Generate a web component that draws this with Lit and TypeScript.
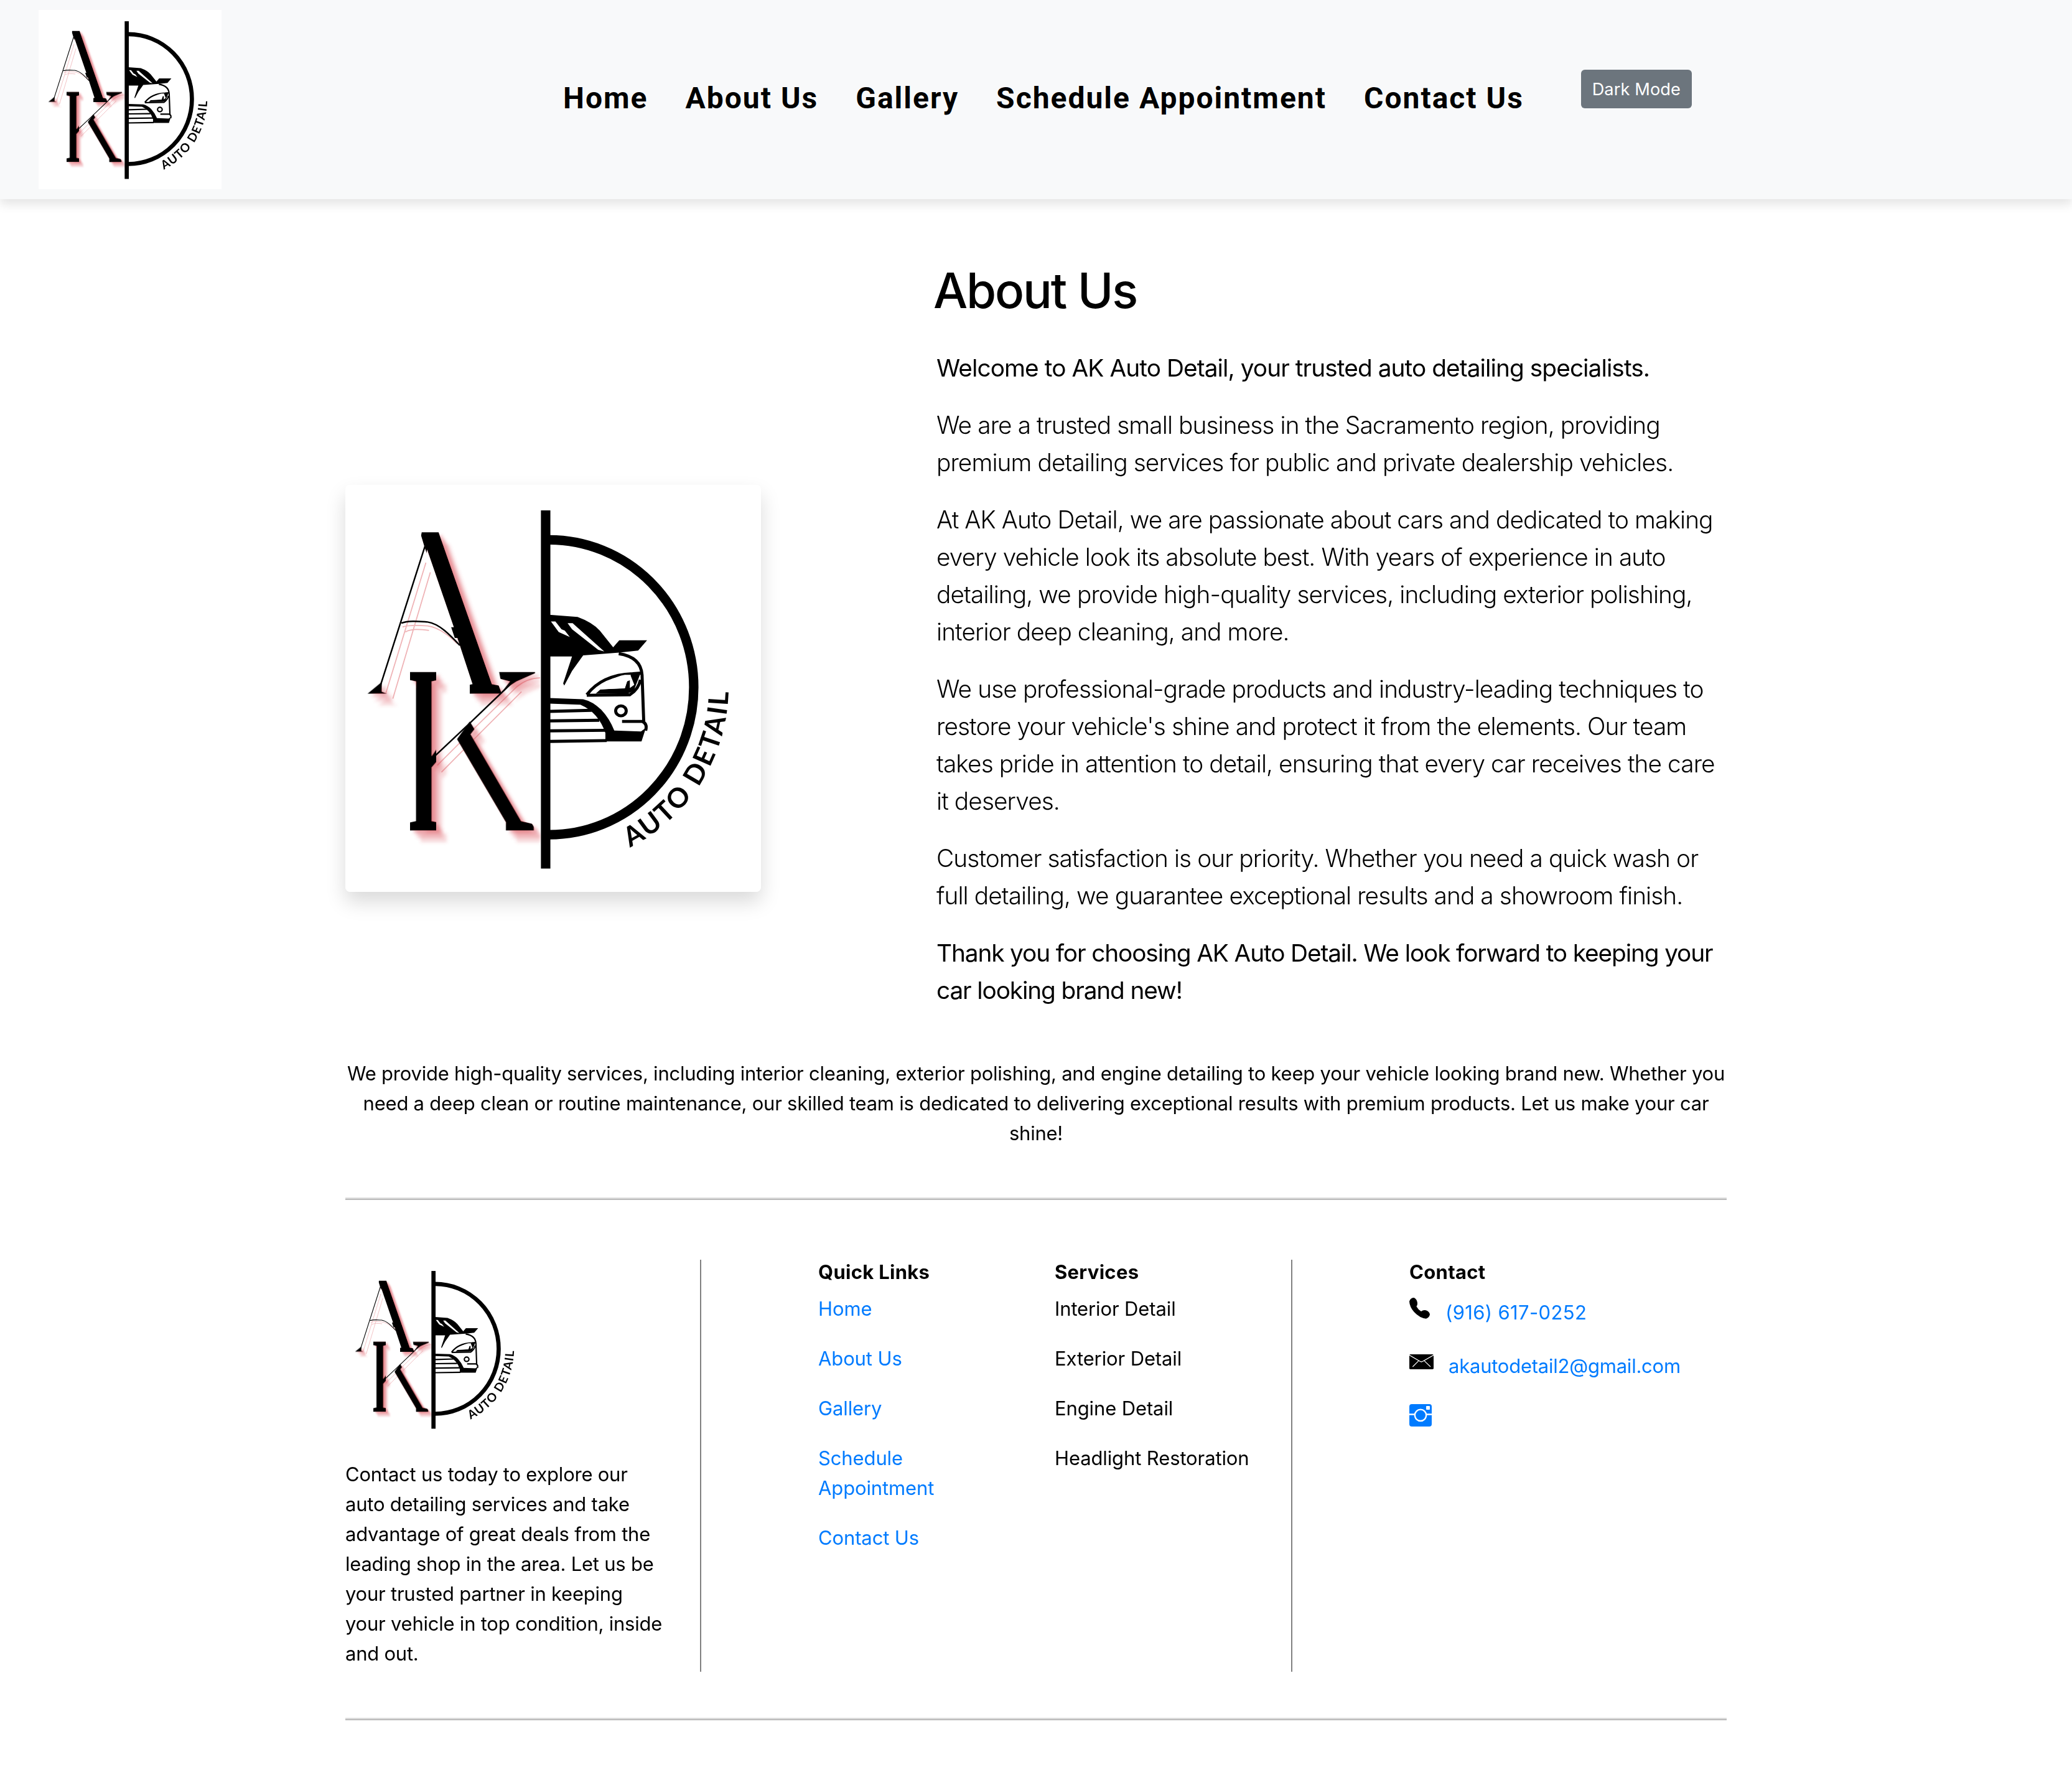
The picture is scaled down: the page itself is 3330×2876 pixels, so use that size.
import { LitElement, html, css } from "lit";
import { customElement } from "lit/decorators.js";

@customElement("ak-logo")
class AkLogo extends LitElement {
  static styles = css`
    :host { display: block; }
    svg { display: block; width: 100%; height: 100%; }
    .letter { font: 400 100px "Liberation Serif", serif; }
    .tag { font: 700 98px Lato, Inter, sans-serif; }
    .hair { fill: none; stroke: #000; stroke-width: 5.5; }
    .ghost { fill: none; stroke: #efb3b6; stroke-width: 4; }
    .line { fill: none; stroke: #000; stroke-width: 11; }
    .white { fill: #fff; }
  `;
  render() {
    return html`<svg viewBox="34 20 1496 1466" preserveAspectRatio="none">
      <defs>
        <filter id="echo" filterUnits="userSpaceOnUse" x="60" y="150" width="678" height="1220">
          <feFlood flood-color="#d9434f" result="red"></feFlood>
          <feComposite in="red" in2="SourceAlpha" operator="in" result="tint"></feComposite>
          <feOffset in="tint" dx="14" dy="12" result="o1"></feOffset>
          <feOffset in="tint" dx="25" dy="27" result="o2"></feOffset>
          <feOffset in="tint" dx="38" dy="42" result="o3"></feOffset>
          <feComponentTransfer in="o1" result="s1"><feFuncA type="linear" slope="0.34"></feFuncA></feComponentTransfer>
          <feComponentTransfer in="o2" result="s2"><feFuncA type="linear" slope="0.24"></feFuncA></feComponentTransfer>
          <feComponentTransfer in="o3" result="s3"><feFuncA type="linear" slope="0.2"></feFuncA></feComponentTransfer>
          <feMerge result="stack">
            <feMergeNode in="s3"></feMergeNode><feMergeNode in="s2"></feMergeNode><feMergeNode in="s1"></feMergeNode>
          </feMerge>
          <feGaussianBlur in="stack" stdDeviation="6" result="soft"></feGaussianBlur>
          <feMerge><feMergeNode in="soft"></feMergeNode><feMergeNode in="SourceGraphic"></feMergeNode></feMerge>
        </filter>
        <clipPath id="cut-a"><path d="M300 180H374L600 780H482V735L318 240Z"></path></clipPath>
        <clipPath id="cut-stem"><rect x="268" y="680" width="92" height="600"></rect></clipPath>
        <clipPath id="cut-leg"><path d="M436 936L482 872L730 1280H612V1235Z"></path></clipPath>
        <clipPath id="cut-arm"><path d="M585 680H718V698L650 728L600 760Z"></path></clipPath>
        <path id="rim" d="M1058 1326A645 645 0 0 0 1413 760"></path>
      </defs>
      <rect class="white" x="34" y="20" width="1496" height="1466"></rect>
      <path class="ghost" d="M324 300L180 770M340 335L205 790M240 532C262 524 300 526 330 528C372 534 405 560 436 592M250 550C270 538 300 540 335 544"></path>
      <path class="ghost" d="M365 1030L500 895L650 748M380 1055L515 918L668 765M650 748Q690 715 735 715"></path>
      <g filter="url(#echo)">
        <g clip-path="url(#cut-a)">
          <text class="letter" transform="matrix(6.55 0 0.64 8.8 150 772)">A</text>
        </g>
        <path d="M114 772L165 730V765L184 772Z"></path>
        <g clip-path="url(#cut-leg)">
          <text id="k" class="letter" transform="translate(250 1265) scale(6.5 8.72)">K</text>
        </g>
        <g clip-path="url(#cut-stem)">
          <use href="#k" transform="matrix(0.92 0 0 1 -9 0)"></use>
        </g>
        <g clip-path="url(#cut-arm)"><use href="#k" x="38"></use></g>
      </g>
      <path class="hair" d="M321 240L158 750M236 518C262 508 300 512 330 514C372 520 410 560 446 598"></path>
      <path class="hair" d="M338 1014L478 882L645 722"></path>
      <rect x="738" y="112" width="34" height="1290"></rect>
      <path d="M768 218A520 531 0 0 1 768 1280" fill="none" stroke="#000" stroke-width="34"></path>
      <path d="M768 488L870 496Q922 515 950 545L998 605L1020 580H1120L1088 617L1020 624L890 634L850 690L822 743L818 735L850 638H768Z"></path>
      <path class="white" d="M774 512H790L812 540L824 545L842 568L802 550ZM834 518H852L966 620L944 614L850 540Z"></path>
      <path class="line" d="M1018 628Q1098 640 1102 705L1108 872"></path>
      <path class="line" d="M1030 872H1102Q1122 880 1115 905"></path>
      <path class="line" d="M903 776Q958 704 1068 700L1098 698M903 778L1058 776Q1090 756 1096 722"></path>
      <path d="M1058 700H1096L1072 762L1050 772H935L952 757L1040 752L1048 728L1058 724V752L1074 740Z"></path>
      <path class="white" d="M946 757L1040 753L1050 722L1062 704H1040Q985 714 946 757Z"></path>
      <ellipse class="line" cx="1026" cy="834" rx="19" ry="18"></ellipse>
      <path d="M768 788L890 792Q925 800 955 830Q985 862 1002 905L1098 908L1116 895L1100 944H970V914Q945 840 880 812L768 808Z"></path>
      <path class="line" d="M768 836L920 832M768 870L948 868M768 906L972 904M768 944L975 941"></path>
      <text class="tag"><textPath href="#rim" textLength="696" lengthAdjust="spacing">AUTO DETAIL</textPath></text>
    </svg>`;
  }
}

const NAV = ["Home", "About Us", "Gallery", "Schedule Appointment", "Contact Us"];
const SERVICES = ["Interior Detail", "Exterior Detail", "Engine Detail", "Headlight Restoration"];
const LEAD = [
  "We are a trusted small business in the Sacramento region, providing premium detailing services for public and private dealership vehicles.",
  "At AK Auto Detail, we are passionate about cars and dedicated to making every vehicle look its absolute best. With years of experience in auto detailing, we provide high-quality services, including exterior polishing, interior deep cleaning, and more.",
  "We use professional-grade products and industry-leading techniques to restore your vehicle's shine and protect it from the elements. Our team takes pride in attention to detail, ensuring that every car receives the care it deserves.",
  "Customer satisfaction is our priority. Whether you need a quick wash or full detailing, we guarantee exceptional results and a showroom finish.",
];

@customElement("app-root")
class AppRoot extends LitElement {
  static styles = css`
    :host {
      display: block;
      min-height: 2876px;
      background: #fff;
      color: #000;
      font: 400 31px/48px Inter, "Liberation Sans", sans-serif;
      letter-spacing: -0.23px;
    }
    * { box-sizing: border-box; }
    h1, h2, p, ul { margin: 0; padding: 0; list-style: none; }
    a { color: #007bff; text-decoration: none; }
    .header {
      display: flex;
      align-items: flex-start;
      height: 320px;
      padding: 16px 62px;
      background: #f8f9fa;
      box-shadow: 0 8px 16px rgba(0, 0, 0, 0.11);
    }
    .mark { width: 294px; height: 288px; flex: none; }
    .nav {
      display: flex;
      gap: 60px;
      margin: 106px 0 0 549px;
      font: 700 48px/72px Roboto, sans-serif;
      letter-spacing: 2px;
      white-space: nowrap;
    }
    .nav a { color: #000; }
    .mode {
      width: 178px;
      height: 62px;
      margin: 96px 0 0 92px;
      padding: 0;
      border: 0;
      border-radius: 6px;
      background: #6c757d;
      color: #fff;
      font: 400 27.2px/63px Inter, sans-serif;
      letter-spacing: 0.1px;
      text-align: center;
      white-space: nowrap;
    }
    .container { width: 2220px; margin: 0 auto; }
    .about { display: flex; gap: 282px; padding-top: 98px; }
    .photo {
      width: 668px;
      height: 654px;
      flex: none;
      margin-top: 361px;
      border-radius: 8px;
      overflow: hidden;
      box-shadow: 0 16px 32px rgba(0, 0, 0, 0.15);
    }
    .copy { width: 1270px; font-size: 38.8px; line-height: 60px; letter-spacing: -0.9px; font-weight: 340; }
    .copy p { margin-bottom: 32px; }
    .copy .strong { font-weight: 430; letter-spacing: -0.93px; }
    .copy .thanks { letter-spacing: -1.13px; }
    h1 { margin: 0 0 46px -5px; font-weight: 500; font-size: 78px; line-height: 97px; letter-spacing: -2.2px; }
    .summary { margin: 48px 0 79px; text-align: center; }
    .rule { height: 4px; border-top: 2px solid #ddd; background: #bbb; background-clip: padding-box; }
    .footer { display: grid; grid-template-columns: 570px 190px 380px 380px 190px 510px; margin: 96px 0 74px; height: 662px; }
    .blurb { padding-right: 60px; }
    .blurb .text { margin-top: 33px; }
    .bar { width: 2px; background: #808080; }
    h2 { margin: 1px 0 16px; font-size: 31px; line-height: 38.4px; font-weight: 700; letter-spacing: 0.3px; }
    .list { display: grid; gap: 32px; letter-spacing: -0.12px; }
    .narrow { width: 320px; padding-right: 60px; }
    .wide { white-space: nowrap; }
    .row { display: flex; align-items: flex-start; height: 86px; white-space: nowrap; }
    .row a { margin-top: 6px; letter-spacing: 0.35px; }
    .row .mail { margin-top: 6px; letter-spacing: -0.23px; }
    .phone { width: 33px; height: 34px; margin: 6px 25px 0 0; }
    .envelope { width: 39px; height: 24px; margin: 11px 24px 0 0; }
    .insta { display: block; width: 36px; height: 36px; margin-top: 5px; }
    .wl { fill: none; stroke: #fff; }
  `;
  render() {
    return html`
      <header class="header">
        <ak-logo class="mark"></ak-logo>
        <nav class="nav">${NAV.map((t) => html`<a>${t}</a>`)}</nav>
        <button class="mode">Dark Mode</button>
      </header>
      <main class="container">
        <section class="about">
          <ak-logo class="photo"></ak-logo>
          <div class="copy">
            <h1>About Us</h1>
            <p class="strong">Welcome to AK Auto Detail, your trusted auto detailing specialists.</p>
            ${LEAD.map((t) => html`<p>${t}</p>`)}
            <p class="strong thanks">Thank you for choosing AK Auto Detail. We look forward to keeping your car looking brand new!</p>
          </div>
        </section>
        <p class="summary">We provide high-quality services, including interior cleaning, exterior polishing, and engine detailing to keep your vehicle looking brand new. Whether you need a deep clean or routine maintenance, our skilled team is dedicated to delivering exceptional results with premium products. Let us make your car shine!</p>
        <div class="rule"></div>
        <footer class="footer">
          <div class="blurb">
            <ak-logo class="mark"></ak-logo>
            <p class="text">Contact us today to explore our auto detailing services and take advantage of great deals from the leading shop in the area. Let us be your trusted partner in keeping your vehicle in top condition, inside and out.</p>
          </div>
          <div class="bar"></div>
          <div>
            <h2>Quick Links</h2>
            <ul class="list narrow">${NAV.map((t) => html`<li><a>${t}</a></li>`)}</ul>
          </div>
          <div>
            <h2>Services</h2>
            <ul class="list wide">${SERVICES.map((t) => html`<li>${t}</li>`)}</ul>
          </div>
          <div class="bar"></div>
          <div>
            <h2>Contact</h2>
            <div class="row">
              <svg class="phone" viewBox="45 46 99 102"><path d="M66 46Q78 49 83 66Q86 80 79 88Q88 104 102 112Q112 104 125 107Q141 112 144 126Q142 141 126 147Q96 145 68 115Q46 90 45 64Q50 48 66 46Z"></path></svg>
              <a>(916) 617-0252</a>
            </div>
            <div class="row">
              <svg class="envelope" viewBox="45 318 117 72">
                <rect x="45" y="318" width="117" height="72" rx="5"></rect>
                <path class="wl" stroke-width="4" d="M44 321L95 351Q103 357 111 351L163 321"></path>
                <path class="wl" stroke-width="3.5" d="M90 349L61 378M117 349L147 378"></path>
              </svg>
              <a class="mail">akautodetail2@gmail.com</a>
            </div>
            <svg class="insta" viewBox="45 558 108 108">
              <rect x="45" y="558" width="108" height="108" rx="12" fill="#007bff"></rect>
              <path class="wl" stroke-width="8" d="M45 607.500H153"></path>
              <circle cx="99" cy="611.500" r="27.500" fill="#007bff" stroke="#fff" stroke-width="7"></circle>
              <rect x="126" y="567" width="18" height="18" rx="3" fill="#fff"></rect>
            </svg>
          </div>
        </footer>
        <div class="rule"></div>
      </main>
    `;
  }
}
